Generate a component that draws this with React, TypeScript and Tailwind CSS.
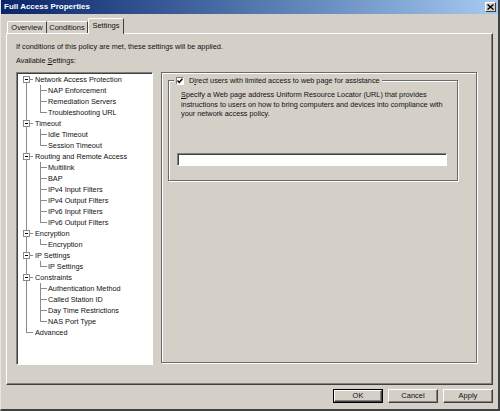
import React from "react";

const tree: { label: string; children: string[] }[] = [
  { label: "Network Access Protection", children: ["NAP Enforcement", "Remediation Servers", "Troubleshooting URL"] },
  { label: "Timeout", children: ["Idle Timeout", "Session Timeout"] },
  {
    label: "Routing and Remote Access",
    children: ["Multilink", "BAP", "IPv4 Input Filters", "IPv4 Output Filters", "IPv6 Input Filters", "IPv6 Output Filters"],
  },
  { label: "Encryption", children: ["Encryption"] },
  { label: "IP Settings", children: ["IP Settings"] },
  { label: "Constraints", children: ["Authentication Method", "Called Station ID", "Day Time Restrictions", "NAS Port Type"] },
  { label: "Advanced", children: [] },
];

const LINE = "#8a8a8a";

function TopRow({ label, first, leaf }: { label: string; first: boolean; leaf: boolean }) {
  return (
    <div className="flex h-[11px] items-center">
      <svg width="17" height="11" className="shrink-0" shapeRendering="crispEdges">
        {leaf ? (
          <>
            <line x1="8.5" y1="0" x2="8.5" y2="5.5" stroke={LINE} />
            <line x1="8.5" y1="5.5" x2="15" y2="5.5" stroke={LINE} />
          </>
        ) : (
          <>
            <line x1="8.5" y1={first ? 5.5 : 0} x2="8.5" y2="11" stroke={LINE} />
            <line x1="11.5" y1="5.5" x2="15" y2="5.5" stroke={LINE} />
            <rect x="5.5" y="2.5" width="6" height="6" fill="#fff" stroke={LINE} />
            <line x1="7" y1="5.5" x2="10" y2="5.5" stroke="#000" />
          </>
        )}
      </svg>
      <span className="whitespace-nowrap leading-[11px]">{label}</span>
    </div>
  );
}

function ChildRow({ label, last }: { label: string; last: boolean }) {
  return (
    <div className="flex h-[11px] items-center">
      <svg width="30" height="11" className="shrink-0" shapeRendering="crispEdges">
        <line x1="8.5" y1="0" x2="8.5" y2="11" stroke={LINE} />
        <line x1="22.5" y1="0" x2="22.5" y2={last ? 5.5 : 11} stroke={LINE} />
        <line x1="22.5" y1="5.5" x2="29" y2="5.5" stroke={LINE} />
      </svg>
      <span className="whitespace-nowrap leading-[11px]">{label}</span>
    </div>
  );
}

function Button({ label, def }: { label: string; def?: boolean }) {
  return (
    <div className={def ? "border border-black" : ""}>
      <div
        className={`flex ${def ? "h-[12px] w-[48px]" : "h-[14px] w-[50px]"} items-center justify-center border border-t-white border-l-white border-r-[#404040] border-b-[#404040] shadow-[inset_-1px_-1px_0_#808080] text-[7.5px]`}
      >
        {label}
      </div>
    </div>
  );
}

export default function App() {
  return (
    <div className="flex h-[411px] w-[500px] flex-col overflow-hidden border-l border-l-[#e8e6e0] border-r-2 border-r-[#404040] border-b-2 border-b-[#404040] bg-[#d4d0c8] font-['Liberation_Sans',Arial,sans-serif] text-[7.3px] text-[#111]">
      {/* Title bar */}
      <div className="flex h-[14px] shrink-0 items-center justify-between bg-gradient-to-r from-[#0a246a] to-[#a6caf0] pl-[3px] pr-[2px]">
        <span className="text-[8px] font-bold leading-none text-white">Full Access Properties</span>
        <div className="flex h-[10px] w-[11px] items-center justify-center border border-t-white border-l-white border-r-[#404040] border-b-[#404040] bg-[#d4d0c8]">
          <svg width="7" height="6" viewBox="0 0 7 6">
            <path d="M0.5 0.5 L6.5 5.5 M6.5 0.5 L0.5 5.5" stroke="#000" strokeWidth="1.4" />
          </svg>
        </div>
      </div>

      {/* Tabs */}
      <div className="relative z-10 -mb-px mt-[4px] flex h-[16px] shrink-0 items-end pl-[6px] text-[7.5px]">
        <div className="mb-px flex h-[12px] w-[40px] items-center justify-center rounded-tl-[2px] border-l border-t border-l-white border-t-white border-r border-r-[#404040] leading-none">
          Overview
        </div>
        <div className="mb-px flex h-[12px] w-[41px] items-center justify-center rounded-tl-[2px] border-t border-t-white border-r border-r-[#404040] leading-none">
          Conditions
        </div>
        <div className="flex h-[16px] w-[36px] items-center justify-center rounded-tl-[2px] border-l border-t border-l-white border-t-white border-r border-r-[#404040] bg-[#d4d0c8] pb-px leading-none">
          Settings
        </div>
      </div>

      {/* Panel */}
      <div className="ml-[5px] mr-[5px] flex h-[352px] shrink-0 flex-col border border-t-white border-l-white border-r-[#404040] border-b-[#404040] shadow-[inset_-1px_-1px_0_#808080] pl-[9px] pt-[8px]">
        <div className="h-[9px] leading-[9px]">If conditions of this policy are met, these settings will be applied.</div>
        <div className="mt-[5px] h-[9px] leading-[9px]">
          Available <u>S</u>ettings:
        </div>
        <div className="mt-[7px] flex gap-[8px]">
          {/* Tree */}
          <div className="h-[293px] w-[137px] border border-t-[#808080] border-l-[#808080] border-r-white border-b-white bg-white shadow-[inset_1px_1px_0_#404040]">
            <div className="pl-px pt-px">
              {tree.map((n, i) => (
                <React.Fragment key={i}>
                  <TopRow label={n.label} first={i === 0} leaf={n.children.length === 0} />
                  {n.children.map((c, j) => (
                    <ChildRow key={j} label={c} last={j === n.children.length - 1} />
                  ))}
                </React.Fragment>
              ))}
            </div>
          </div>

          {/* Right frame */}
          <div className="flex h-[291px] w-[316px] flex-col border border-[#6a6a6a] shadow-[inset_1px_1px_0_#fff,1px_1px_0_#fff]">
            <div className="ml-[6px] mt-[7px] flex w-[290px] flex-col border border-[#6a6a6a] shadow-[inset_1px_1px_0_#fff,1px_1px_0_#fff]">
              <div className="-mt-[5px] ml-[5px] flex h-[9px] items-center gap-[5px] self-start bg-[#d4d0c8] px-[2px]">
                <div className="flex h-[8px] w-[8px] items-center justify-center border border-t-[#808080] border-l-[#808080] border-r-white border-b-white bg-white">
                  <svg width="6" height="6" viewBox="0 0 6 6">
                    <path d="M0.5 2.5 L2.2 4.5 L5.5 0.8" stroke="#000" strokeWidth="1.4" fill="none" />
                  </svg>
                </div>
                <span className="whitespace-nowrap leading-[9px]">
                  D<u>i</u>rect users with limited access to web page for assistance
                </span>
              </div>
              <div className="mt-[5px] whitespace-nowrap pl-[12px] leading-[9.5px]">
                <u>S</u>pecify a Web page address Uniform Resource Locator (URL) that provides
                <br />
                instructions to users on how to bring computers and devices into compliance with
                <br />
                your network access policy.
              </div>
              <div className="mb-[14px] ml-[8px] mt-[34px] h-[13px] w-[270px] border border-t-[#808080] border-l-[#808080] border-r-white border-b-white bg-white shadow-[inset_1px_1px_0_#404040]" />
            </div>
          </div>
        </div>
      </div>

      {/* Buttons */}
      <div className="mt-[4px] flex justify-end gap-[5px] pr-[5px]">
        <Button label="OK" def />
        <Button label="Cancel" />
        <Button label="Apply" />
      </div>
    </div>
  );
}
